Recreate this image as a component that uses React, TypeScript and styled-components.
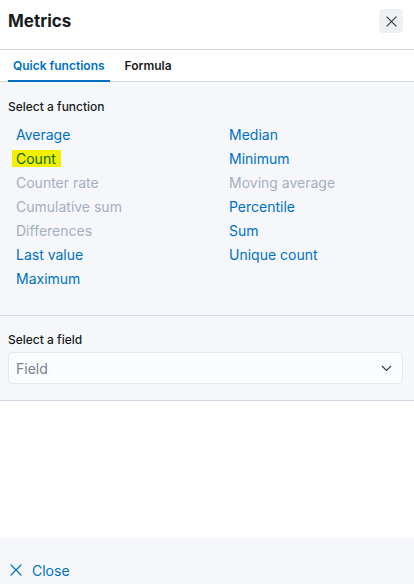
import React from "react";
import styled, { createGlobalStyle } from "styled-components";

const GlobalStyle = createGlobalStyle`
  html, body { margin: 0; padding: 0; background: #ffffff; overflow: hidden; }
  body { font-family: Inter, "Noto Sans", "Liberation Sans", sans-serif; color: #1a1c21; }
  * { box-sizing: border-box; }
`;

const Flyout = styled.div`
  width: 414px;
  height: 584px;
  display: flex;
  flex-direction: column;
  background: #ffffff;
`;

const Header = styled.div`
  display: flex;
  justify-content: space-between;
  align-items: flex-start;
  height: 50px;
  padding: 9px 11px 0 8px;
  border-bottom: 1px solid #d3dae6;
`;

const Title = styled.h2`
  margin: 0;
  font-size: 17px;
  line-height: 24px;
  font-weight: 700;
  color: #1a1c21;
`;

const IconButton = styled.button`
  width: 24px;
  height: 24px;
  border: none;
  border-radius: 4px;
  background: #eef0f3;
  display: flex;
  align-items: center;
  justify-content: center;
  padding: 0;
  color: #343741;
`;

const TabBar = styled.div`
  display: flex;
  gap: 10px;
  height: 32px;
  padding: 0 8px;
  border-bottom: 1px solid #d3dae6;
`;

const Tab = styled.div<{ $active?: boolean }>`
  display: flex;
  align-items: center;
  padding: 1px 5px 0;
  font-size: 12px;
  font-weight: 600;
  color: ${(p) => (p.$active ? "#0071c2" : "#1a1c21")};
  border-bottom: 2px solid ${(p) => (p.$active ? "#0071c2" : "transparent")};
  margin-bottom: -1px;
`;

const Section = styled.div<{ $pt: number; $pb: number }>`
  background: #f5f7fa;
  padding: ${(p) => p.$pt}px 11px ${(p) => p.$pb}px 8px;
  border-bottom: 1px solid #d3dae6;
`;

const Label = styled.div`
  font-size: 12px;
  line-height: 18px;
  font-weight: 500;
  color: #1a1c21;
`;

const FunctionGrid = styled.div`
  display: grid;
  grid-template-columns: 213px 1fr;
  grid-auto-flow: column;
  grid-template-rows: repeat(7, 24px);
  margin-top: 7px;
`;

const FunctionItem = styled.div<{ $disabled?: boolean }>`
  padding: 0 8px;
  font-size: 14px;
  line-height: 24px;
  color: ${(p) => (p.$disabled ? "#a7afbe" : "#0071c2")};
  white-space: nowrap;
`;

const Highlight = styled.span`
  display: inline-block;
  margin-left: -4px;
  padding: 0 5px 0 4px;
  line-height: 17px;
  background: #f2f000;
  color: #086a08;
`;

const SelectBox = styled.div`
  margin-top: 3px;
  height: 32px;
  border: 1px solid #e3e8f0;
  border-radius: 4px;
  background: #fbfcfd;
  display: flex;
  align-items: center;
  justify-content: space-between;
  padding: 0 10px 0 7px;
`;

const Placeholder = styled.span`
  font-size: 14px;
  color: #7b818d;
`;

const Body = styled.div`
  flex: 1;
  background: #ffffff;
`;

const Footer = styled.div`
  height: 46px;
  background: #f5f7fa;
  padding: 20px 8px 0 10px;
`;

const CloseLink = styled.div`
  display: flex;
  align-items: center;
  gap: 10px;
  height: 24px;
  font-size: 14px;
  color: #0071c2;
`;

const functions: { name: string; disabled?: boolean; highlighted?: boolean }[] = [
  { name: "Average" },
  { name: "Count", highlighted: true },
  { name: "Counter rate", disabled: true },
  { name: "Cumulative sum", disabled: true },
  { name: "Differences", disabled: true },
  { name: "Last value" },
  { name: "Maximum" },
  { name: "Median" },
  { name: "Minimum" },
  { name: "Moving average", disabled: true },
  { name: "Percentile" },
  { name: "Sum" },
  { name: "Unique count" },
];

const CrossIcon = ({ size, color }: { size: number; color: string }) => (
  <svg width={size} height={size} viewBox="0 0 12 12" fill="none">
    <path d="M1 1L11 11M11 1L1 11" stroke={color} strokeWidth="1.2" strokeLinecap="round" />
  </svg>
);

export default function App() {
  return (
    <>
      <GlobalStyle />
      <Flyout>
        <Header>
          <Title>Metrics</Title>
          <IconButton aria-label="Close">
            <CrossIcon size={11} color="#343741" />
          </IconButton>
        </Header>
        <TabBar>
          <Tab $active>Quick functions</Tab>
          <Tab>Formula</Tab>
        </TabBar>
        <Section $pt={16} $pb={24}>
          <Label>Select a function</Label>
          <FunctionGrid>
            {functions.map((f) => (
              <FunctionItem key={f.name} $disabled={f.disabled}>
                {f.highlighted ? <Highlight>{f.name}</Highlight> : f.name}
              </FunctionItem>
            ))}
          </FunctionGrid>
        </Section>
        <Section $pt={15} $pb={16}>
          <Label>Select a field</Label>
          <SelectBox>
            <Placeholder>Field</Placeholder>
            <svg width="11" height="7" viewBox="0 0 11 7" fill="none">
              <path d="M1 1L5.5 5.5L10 1" stroke="#343741" strokeWidth="1.1" />
            </svg>
          </SelectBox>
        </Section>
        <Body />
        <Footer>
          <CloseLink>
            <CrossIcon size={12} color="#0071c2" />
            Close
          </CloseLink>
        </Footer>
      </Flyout>
    </>
  );
}
